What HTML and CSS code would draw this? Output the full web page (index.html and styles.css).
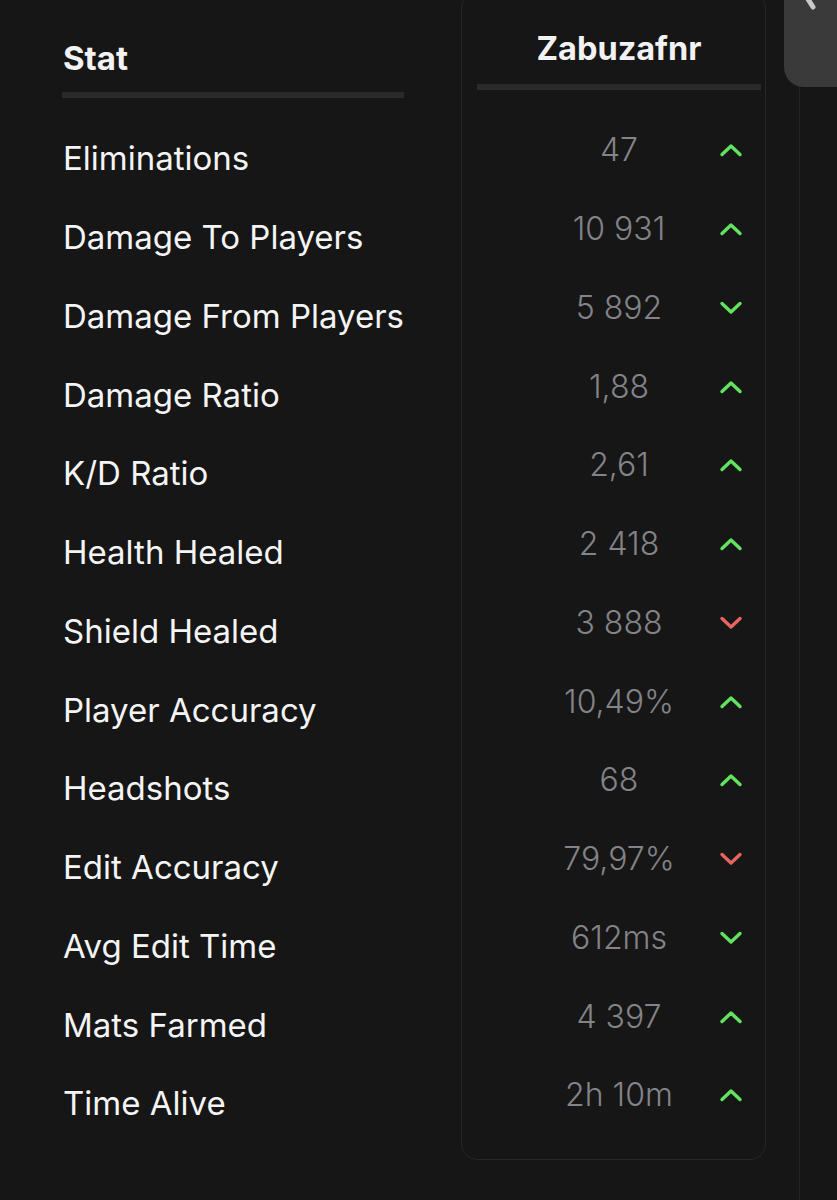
FILE: index.html
```html
<!DOCTYPE html>
<html>
<head>
<meta charset="utf-8">
<link rel="stylesheet" href="styles.css">
</head>
<body>
<div class="page">
  <section class="stats">
    <div class="head">Stat</div>
    <div class="bar"></div>
    <ul class="labels">
      <li>Eliminations</li>
      <li>Damage To Players</li>
      <li>Damage From Players</li>
      <li>Damage Ratio</li>
      <li>K/D Ratio</li>
      <li>Health Healed</li>
      <li>Shield Healed</li>
      <li>Player Accuracy</li>
      <li>Headshots</li>
      <li>Edit Accuracy</li>
      <li>Avg Edit Time</li>
      <li>Mats Farmed</li>
      <li>Time Alive</li>
    </ul>
  </section>
  <section class="card">
    <div class="card-head">Zabuzafnr</div>
    <div class="bar card-bar"></div>
    <ul class="values">
      <li><span class="val">47</span><svg class="arrow up" viewBox="0 0 24 14"><path d="M3 11.5 L12 3 L21 11.5"/></svg></li>
      <li><span class="val">10 931</span><svg class="arrow up" viewBox="0 0 24 14"><path d="M3 11.5 L12 3 L21 11.5"/></svg></li>
      <li><span class="val">5 892</span><svg class="arrow down-good" viewBox="0 0 24 14"><path d="M3 2.5 L12 11 L21 2.5"/></svg></li>
      <li><span class="val">1,88</span><svg class="arrow up" viewBox="0 0 24 14"><path d="M3 11.5 L12 3 L21 11.5"/></svg></li>
      <li><span class="val">2,61</span><svg class="arrow up" viewBox="0 0 24 14"><path d="M3 11.5 L12 3 L21 11.5"/></svg></li>
      <li><span class="val">2 418</span><svg class="arrow up" viewBox="0 0 24 14"><path d="M3 11.5 L12 3 L21 11.5"/></svg></li>
      <li><span class="val">3 888</span><svg class="arrow down-bad" viewBox="0 0 24 14"><path d="M3 2.5 L12 11 L21 2.5"/></svg></li>
      <li><span class="val">10,49%</span><svg class="arrow up" viewBox="0 0 24 14"><path d="M3 11.5 L12 3 L21 11.5"/></svg></li>
      <li><span class="val">68</span><svg class="arrow up" viewBox="0 0 24 14"><path d="M3 11.5 L12 3 L21 11.5"/></svg></li>
      <li><span class="val">79,97%</span><svg class="arrow down-bad" viewBox="0 0 24 14"><path d="M3 2.5 L12 11 L21 2.5"/></svg></li>
      <li><span class="val">612ms</span><svg class="arrow down-good" viewBox="0 0 24 14"><path d="M3 2.5 L12 11 L21 2.5"/></svg></li>
      <li><span class="val">4 397</span><svg class="arrow up" viewBox="0 0 24 14"><path d="M3 11.5 L12 3 L21 11.5"/></svg></li>
      <li><span class="val">2h 10m</span><svg class="arrow up" viewBox="0 0 24 14"><path d="M3 11.5 L12 3 L21 11.5"/></svg></li>
    </ul>
  </section>
  <aside class="side">
    <div class="knob">
      <svg class="knob-mark" viewBox="0 0 20 16"><path d="M2 -4 L9 7"/></svg>
    </div>
  </aside>
</div>
</body>
</html>
```

FILE: styles.css
```css
html, body {
  margin: 0;
  padding: 0;
  background: #161616;
}
body {
  font-family: Inter, "Noto Sans", sans-serif;
  color: #f2f2f2;
  height: 1200px;
  overflow: hidden;
}
ul {
  list-style: none;
  margin: 0;
  padding: 0;
}
.page {
  display: flex;
  align-items: flex-start;
  height: 1200px;
}
.stats {
  margin-left: 62px;
  width: 342px;
  padding-top: 38px;
}
.head {
  font-size: 33px;
  font-weight: 700;
  line-height: 40px;
  padding-left: 1px;
}
.bar {
  height: 6px;
  background: #2a2a2a;
  margin-top: 14px;
}
.labels {
  margin-top: 21px;
}
.labels li {
  height: 78.75px;
  display: flex;
  align-items: center;
  font-size: 33px;
  line-height: 40px;
  color: #f4f4f4;
  padding-left: 1px;
  white-space: nowrap;
}
.card {
  margin-left: 57px;
  margin-top: -8px;
  width: 284px;
  height: 1166px;
  padding: 0 4px 0 15px;
  border: 1px solid #262626;
  border-radius: 16px;
  box-sizing: content-box;
}
.card-head {
  margin-top: 36px;
  font-size: 32.5px;
  font-weight: 700;
  line-height: 40px;
  text-align: center;
}
.card-bar {
  margin-top: 15px;
}
.values {
  margin-top: 21px;
}
.values li {
  height: 78.75px;
  display: grid;
  grid-template-columns: 1fr auto 1fr;
  align-items: center;
}
.val {
  grid-column: 2;
  font-size: 32px;
  font-weight: 300;
  line-height: 40px;
  color: #838388;
  white-space: nowrap;
}
.arrow {
  grid-column: 3;
  justify-self: end;
  width: 24px;
  height: 14px;
  margin-right: 18px;
  fill: none;
  stroke-width: 3.4;
  stroke-linecap: round;
  stroke-linejoin: round;
}
.arrow.up, .arrow.down-good {
  stroke: #62e35f;
}
.arrow.down-bad {
  stroke: #e6665f;
}
.side {
  margin-left: 33px;
  height: 1200px;
  flex: 1;
  border-left: 1px solid #232323;
  position: relative;
}
.knob {
  position: absolute;
  left: -16px;
  top: -30px;
  width: 80px;
  height: 117px;
  background: #3a3a3b;
  border-radius: 20px;
}
.knob-mark {
  position: absolute;
  left: 20px;
  top: 30px;
  width: 20px;
  height: 16px;
  fill: none;
  stroke: #c9c9cc;
  stroke-width: 5;
  stroke-linecap: round;
}
```
